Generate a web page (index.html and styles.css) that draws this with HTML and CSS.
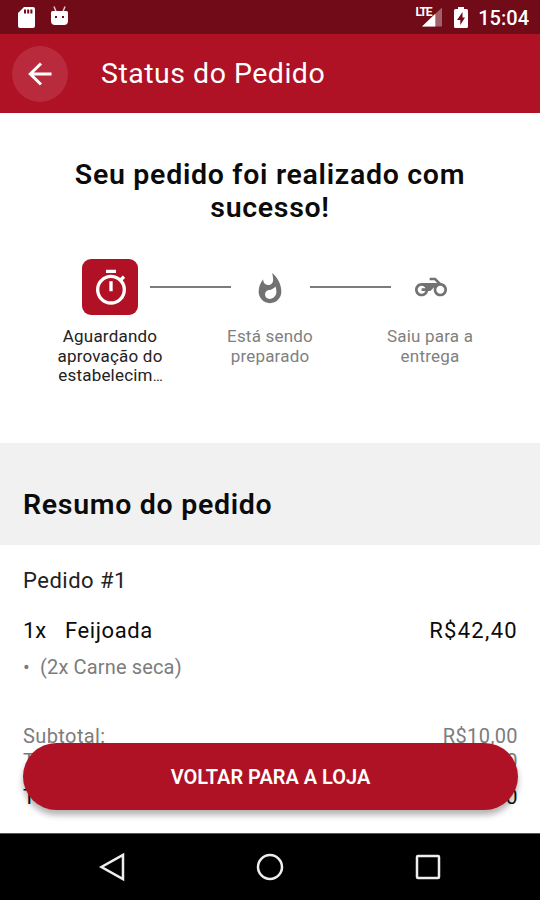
FILE: index.html
```html
<!DOCTYPE html>
<html lang="pt-BR">
<head>
<meta charset="utf-8">
<title>Status do Pedido</title>
<link rel="stylesheet" href="styles.css">
</head>
<body>
<div class="screen">
  <div class="statusbar">
    <svg class="sd" viewBox="0 0 17 21"><path fill="#fff" fill-rule="evenodd" d="M6 0h9a2 2 0 0 1 2 2v17a2 2 0 0 1-2 2H2a2 2 0 0 1-2-2V6zM6 2.5v4h2v-4zM9.200 2.500v4h2v-4zM12.400 2.500v4h2v-4z"/></svg>
    <svg class="droid" viewBox="0 0 17 20"><path d="M3 0.500l2 5M14 .5l-2 5" stroke="#e3c9cc" stroke-width="1.500"/><path fill="#fff" fill-rule="evenodd" d="M1.500 5h14q1.500 0 1.500 1.500V15q0 4-4 4H4q-4 0-4-4V6.500Q0 5 1.500 5zM4 10v2h2v-2zM11 10v2h2v-2z"/></svg>
    <span class="spacer"></span>
    <span class="lte">LTE</span>
    <svg class="signal" viewBox="0 0 21 20"><path fill="#fff" opacity=".35" d="M21 0v20H0z"/><path fill="#fff" d="M14 6.700V20H0z"/></svg>
    <svg class="battery" viewBox="0 0 14 21"><path fill="#fff" fill-rule="evenodd" d="M4 0h6v2h2.500Q14 2 14 3.500v16q0 1.500-1.500 1.500h-11Q0 21 0 19.500v-16Q0 2 1.500 2H4zM8.500 5L3 13h3.300v5L11 10.500H8.500z"/></svg>
    <span class="clock">15:04</span>
  </div>
  <header class="appbar">
    <div class="back"><svg viewBox="0 0 24 24"><path fill="none" stroke="#fff" stroke-width="3" d="M23.500 12H2M13 1.500L2.300 12 13 22.500"/></svg></div>
    <h1 class="title">Status do Pedido</h1>
  </header>
  <main class="content">
    <section class="progress">
      <h2 class="success">Seu pedido foi realizado com<br>sucesso!</h2>
      <div class="icons">
        <div class="step active"><svg class="timer" viewBox="0 0 24 24"><path d="M15 1H9v2h6V1zm-4 13h2V8h-2v6zm8.030-6.610l1.420-1.420c-.43-.51-.9-.99-1.410-1.410l-1.420 1.420C16.070 4.740 14.120 4 12 4c-4.970 0-9 4.030-9 9s4.020 9 9 9 9-4.030 9-9c0-2.120-.74-4.070-1.970-5.610zM12 20c-3.870 0-7-3.130-7-7s3.130-7 7-7 7 3.130 7 7-3.130 7-7 7z"/></svg></div>
        <div class="line"></div>
        <div class="step"><svg class="flame" viewBox="0 0 24 24"><path d="M13.500.67s.74 2.650.74 4.800c0 2.060-1.350 3.730-3.410 3.730-2.070 0-3.630-1.670-3.630-3.730l.03-.36C5.210 7.510 4 10.620 4 14c0 4.420 3.580 8 8 8s8-3.580 8-8C20 8.610 17.410 3.800 13.500.67zM11.710 19c-1.780 0-3.220-1.400-3.220-3.140 0-1.620 1.050-2.760 2.810-3.120 1.770-.36 3.600-1.210 4.620-2.580.39 1.290.59 2.650.59 4.040 0 2.650-2.150 4.800-4.800 4.800z"/></svg></div>
        <div class="line"></div>
        <div class="step"><svg class="moto" viewBox="0 0 24 24"><path d="M19.440 9.030L15.410 5H11v2h3.590l2 2H5c-2.800 0-5 2.200-5 5s2.200 5 5 5c2.460 0 4.450-1.690 4.900-4h1.650l2.770-2.770c-.21.54-.32 1.140-.32 1.770 0 2.800 2.200 5 5 5s5-2.200 5-5c0-2.650-1.970-4.770-4.560-4.970zM7.820 15C7.400 16.150 6.280 17 5 17c-1.630 0-3-1.370-3-3s1.370-3 3-3c1.280 0 2.400.85 2.820 2H5v2h2.820zM19 17c-1.660 0-3-1.340-3-3s1.340-3 3-3 3 1.340 3 3-1.340 3-3 3z"/></svg></div>
      </div>
      <div class="labels">
        <p class="label current">Aguardando<br>aprovação do<br>estabelecim<span class="ellipsis">…</span></p>
        <p class="label">Está sendo<br>preparado</p>
        <p class="label">Saiu para a<br>entrega</p>
      </div>
    </section>
    <section class="band"><h2 class="bandtitle">Resumo do pedido</h2></section>
    <section class="order">
      <p class="number">Pedido #1</p>
      <div class="item"><span class="qty">1x</span><span class="name">Feijoada</span><span class="price">R$42,40</span></div>
      <div class="extra"><span class="dot">•</span><span>(2x Carne seca)</span></div>
      <div class="row sub"><span>Subtotal:</span><span>R$10,00</span></div>
      <div class="row fee"><span>T</span><span>0</span></div>
      <div class="row total"><span>T</span><span>0</span></div>
    </section>
    <button class="cta">VOLTAR PARA A LOJA</button>
  </main>
  <nav class="navbar">
    <svg viewBox="0 0 30 30"><path d="M26 3v24L4.500 15z"/></svg>
    <svg viewBox="0 0 30 30"><circle cx="15" cy="15" r="12"/></svg>
    <svg viewBox="0 0 30 30"><rect x="4" y="4" width="22" height="22" rx="1"/></svg>
  </nav>
</div>
</body>
</html>
```
FILE: styles.css
```css
* { box-sizing: border-box; }
body { margin: 0; font-family: Roboto, "Noto Sans", sans-serif; background: #fff; color: #0b0b0b; }
h1, h2, p { margin: 0; }
svg { display: block; flex: none; }
.screen { width: 540px; height: 900px; display: flex; flex-direction: column; overflow: hidden; }
.statusbar { height: 34px; flex: none; background: #700b17; color: #fff; display: flex; align-items: flex-start; padding: 7px 11px 0 18px; }
.sd { width: 17px; height: 21px; }
.droid { width: 17px; height: 20px; margin-left: 16px; margin-top: -1px; }
.spacer { flex: 1; }
.lte { font-size: 12px; line-height: 11px; font-weight: 700; letter-spacing: -1.2px; margin-right: -9px; }
.signal { width: 20px; height: 20px; }
.battery { width: 14px; height: 21px; margin-left: 12px; }
.clock { font-size: 20px; line-height: 22px; font-weight: 500; margin-left: 10px; }
.appbar { height: 79px; flex: none; background: #ae1224; display: flex; align-items: center; padding-left: 12px; color: #fff; }
.back { width: 56px; height: 56px; border-radius: 50%; background: #b92b3c; display: flex; align-items: center; justify-content: center; }
.back svg { width: 24px; height: 24px; }
.title { margin-left: 33px; font-size: 28.500px; line-height: 32px; font-weight: 400; letter-spacing: 0.500px; }
.content { flex: 1; min-height: 0; position: relative; overflow: hidden; }
.progress { height: 330px; padding-top: 45px; }
.success { text-align: center; font-size: 28.500px; line-height: 33px; font-weight: 600; letter-spacing: 0.700px; }
.icons { display: flex; align-items: center; padding-left: 82px; margin-top: 35px; }
.step { width: 56px; height: 56px; display: flex; align-items: center; justify-content: center; fill: #727272; }
.active { background: #b01124; border-radius: 9px; fill: #fff; }
.timer { width: 40px; height: 40px; margin: 1px 0 0 2px; }
.flame { width: 34px; height: 34px; margin-top: 3px; }
.moto { width: 32px; height: 32px; margin-left: 1px; }
.line { width: 81px; height: 2px; margin: 0 11px 0 12px; background: #7c7c7c; }
.labels { display: grid; grid-template-columns: repeat(3, 160px); justify-content: center; margin-top: 12px; }
.label { text-align: center; font-size: 17px; line-height: 19.500px; letter-spacing: 0.200px; color: #808080; }
.current { color: #222; }
.ellipsis { letter-spacing: -1px; font-size: 15px; }
.band { height: 102px; background: #f1f1f1; padding: 44px 23px 0; }
.bandtitle { font-size: 28.500px; line-height: 36px; font-weight: 600; letter-spacing: 0.700px; }
.order { padding: 22px 22px 0 23px; }
.number { font-size: 22px; line-height: 28px; letter-spacing: 0.500px; color: #222; }
.item { display: flex; margin-top: 22px; font-size: 22px; line-height: 28px; }
.qty { width: 42px; }
.name { flex: 1; letter-spacing: 0.600px; }
.price { letter-spacing: 1.300px; }
.extra { display: flex; margin-top: 9px; font-size: 20px; line-height: 26px; color: #7c7c7c; letter-spacing: 0.150px; }
.dot { width: 17px; font-size: 20px; }
.row { display: flex; justify-content: space-between; font-size: 20px; line-height: 26px; letter-spacing: 0.400px; color: #7c7c7c; }
.sub { margin-top: 43px; }
.fee { margin-top: -1px; }
.total { margin-top: 10px; font-size: 21px; color: #111; }
.cta { position: absolute; left: 23px; right: 22px; top: 630px; height: 67px; border: 0; border-radius: 34px; background: #ae1224; color: #fff; font: 600 20px/24px Roboto, sans-serif; box-shadow: 0 5px 6px rgba(0, 0, 0, 0.3); }
.navbar { height: 67px; flex: none; background: #000; border-top: 1px solid #555; display: flex; align-items: center; justify-content: space-between; padding: 0 97px; }
.navbar svg { width: 30px; height: 30px; fill: none; stroke: #eee; stroke-width: 2.500; }
```
